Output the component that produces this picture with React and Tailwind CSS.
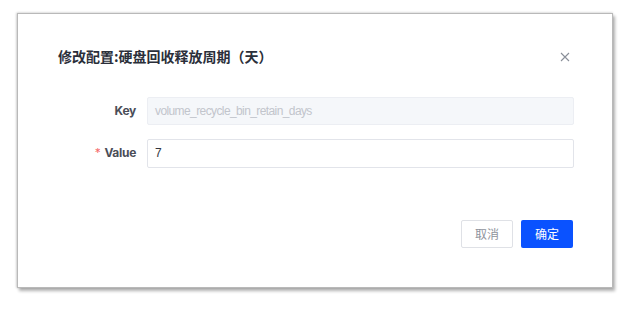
export default function App() {
  return (
    <div className="w-[626px] h-[312px] bg-white pt-[13px] pl-[17px] font-['Inter','Noto_Sans_CJK_SC',sans-serif]">
      <div className="w-[596px] h-[275px] bg-white border-[1.5px] border-[#b9b9b9] shadow-[2px_3px_3px_rgba(0,0,0,0.3),-1px_0_2px_rgba(0,0,0,0.15),0_-1px_2px_rgba(0,0,0,0.08)] flex flex-col">
        <div className="flex items-center justify-between pt-[32px] pl-[40px] pr-[42px] h-[52px]">
          <div className="text-[14px] leading-[20px] font-bold text-[#2b2f3a] font-['Noto_Sans_CJK_SC',sans-serif]">
            修改配置:硬盘回收释放周期（天）
          </div>
          <svg width="10" height="10" viewBox="0 0 10 10" className="mt-[1px]">
            <path d="M1 1L9 9M9 1L1 9" stroke="#8a8f99" strokeWidth="1.1" fill="none" />
          </svg>
        </div>
        <div className="mt-[31px] flex flex-col gap-[14px] pl-[40px] pr-[38px]">
          <div className="flex items-center h-[28px]">
            <div className="w-[78px] text-right text-[12px] font-bold text-[#4a4d57] tracking-[-0.3px]">Key</div>
            <div className="ml-[11px] flex-1 h-[28px] rounded-[2px] bg-[#f5f7fa] border border-[#eceef3] flex items-center pl-[7px] text-[12px] tracking-[-0.6px] text-[#c2c5cc] font-['Liberation_Sans',sans-serif]">
              volume_recycle_bin_retain_days
            </div>
          </div>
          <div className="flex items-center h-[28px]">
            <div className="w-[78px] text-right text-[12px] font-bold text-[#4a4d57] tracking-[-0.3px]">
              <span className="text-[#f56c6c] mr-[4px] font-normal">*</span>Value
            </div>
            <div className="ml-[11px] flex-1 h-[29px] rounded-[2px] bg-white border border-[#e2e4ea] flex items-center pl-[7px] text-[12px] text-[#333640] font-['Liberation_Sans',sans-serif]">
              7
            </div>
          </div>
        </div>
        <div className="mt-[53px] flex justify-end gap-[8px] pr-[39px]">
          <div className="w-[52px] h-[28px] rounded-[2px] border border-[#dfe1e6] bg-white flex items-center justify-center text-[12px] text-[#8e939c] font-['Noto_Sans_CJK_SC',sans-serif]">
            取消
          </div>
          <div className="w-[52px] h-[28px] rounded-[2px] bg-[#0a52ff] flex items-center justify-center text-[12px] text-white font-['Noto_Sans_CJK_SC',sans-serif]">
            确定
          </div>
        </div>
      </div>
    </div>
  );
}
